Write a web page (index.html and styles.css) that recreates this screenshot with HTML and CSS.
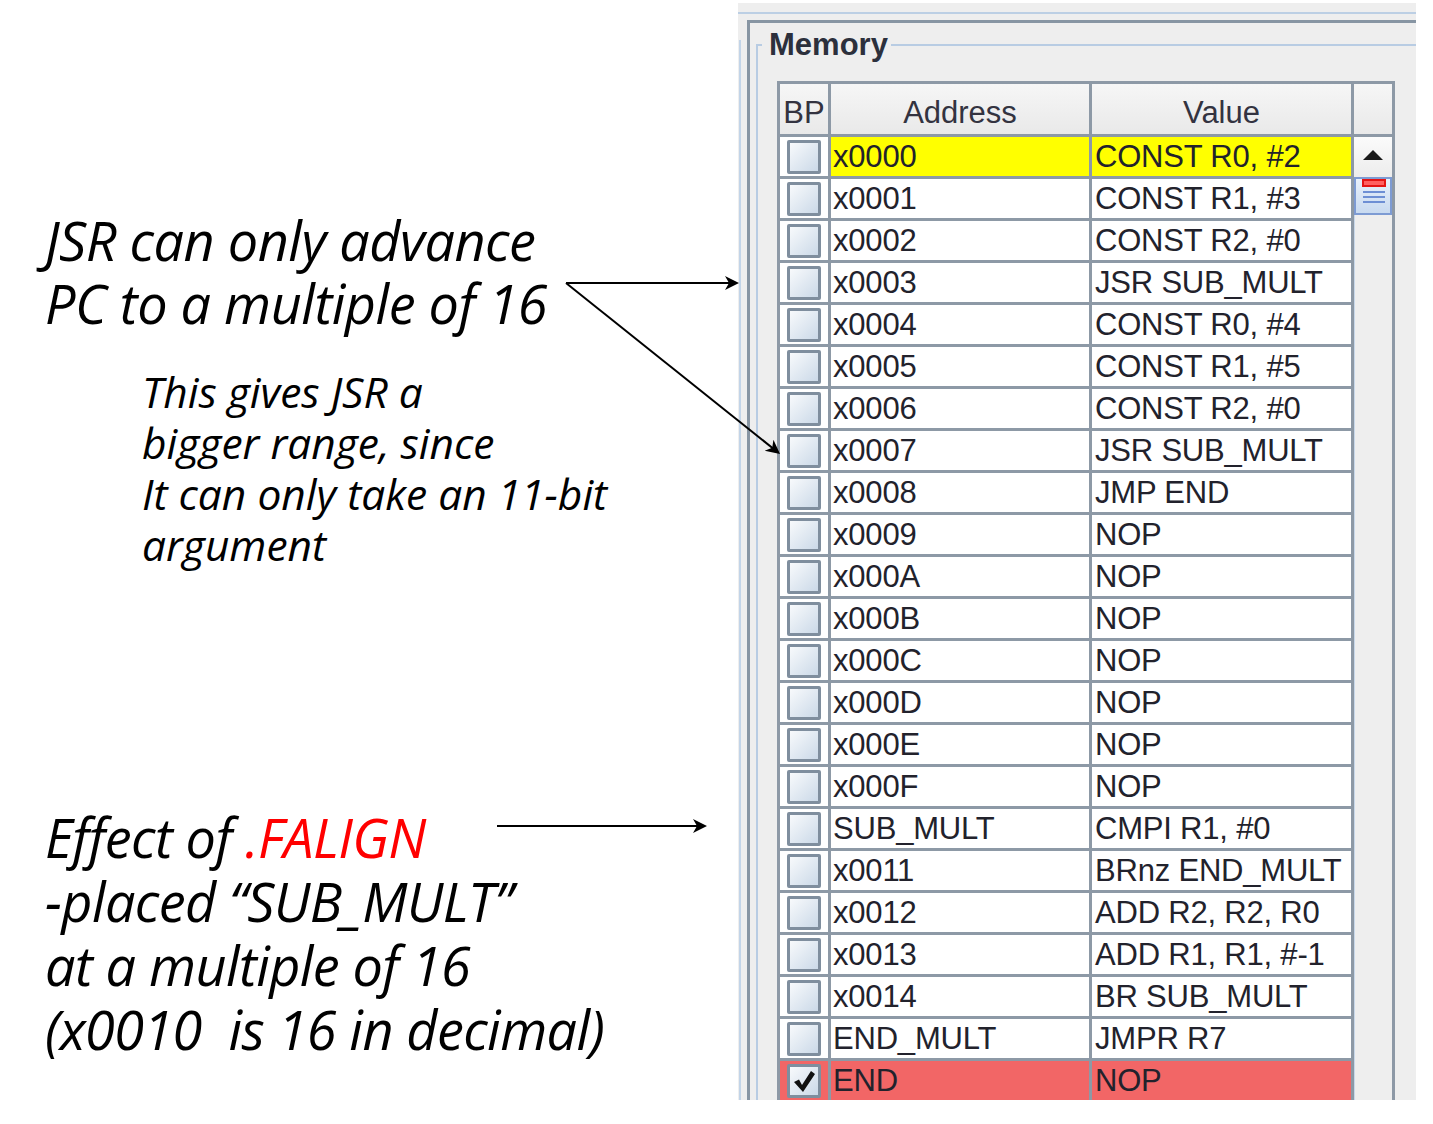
FILE: index.html
```html
<!DOCTYPE html>
<html>
<head>
<meta charset="utf-8">
<link rel="stylesheet" href="styles.css">
</head>
<body>
<div class="page">
  <div class="notes">
    <div class="note-main">JSR can only advance<br>PC to a multiple of 16</div>
    <div class="note-sub">This gives JSR a<br>bigger range, since<br>It can only take an 11-bit<br>argument</div>
    <div class="note-effect">Effect of <span class="red">.FALIGN</span><br>-placed “SUB_MULT”<br>at a multiple of 16<br>(x0010&nbsp; is 16 in decimal)</div>
  </div>

  <div class="panel">
    <div class="panel-top"></div>
    <div class="panel-body">
      <div class="gutter"><span></span></div>
      <div class="frame">
        <fieldset class="mem">
          <legend>Memory</legend>
          <div class="tbl">
            <div class="thead">
              <div class="th">BP</div>
              <div class="th">Address</div>
              <div class="th">Value</div>
              <div class="th"></div>
            </div>
            <div class="tbody">
              <div class="rows">
                <div class="row hl"><div class="bp"><span class="cb"></span></div><div class="cell">x0000</div><div class="cell val">CONST R0, #2</div></div>
                <div class="row"><div class="bp"><span class="cb"></span></div><div class="cell">x0001</div><div class="cell val">CONST R1, #3</div></div>
                <div class="row"><div class="bp"><span class="cb"></span></div><div class="cell">x0002</div><div class="cell val">CONST R2, #0</div></div>
                <div class="row"><div class="bp"><span class="cb"></span></div><div class="cell">x0003</div><div class="cell val">JSR SUB_MULT</div></div>
                <div class="row"><div class="bp"><span class="cb"></span></div><div class="cell">x0004</div><div class="cell val">CONST R0, #4</div></div>
                <div class="row"><div class="bp"><span class="cb"></span></div><div class="cell">x0005</div><div class="cell val">CONST R1, #5</div></div>
                <div class="row"><div class="bp"><span class="cb"></span></div><div class="cell">x0006</div><div class="cell val">CONST R2, #0</div></div>
                <div class="row"><div class="bp"><span class="cb"></span></div><div class="cell">x0007</div><div class="cell val">JSR SUB_MULT</div></div>
                <div class="row"><div class="bp"><span class="cb"></span></div><div class="cell">x0008</div><div class="cell val">JMP END</div></div>
                <div class="row"><div class="bp"><span class="cb"></span></div><div class="cell">x0009</div><div class="cell val">NOP</div></div>
                <div class="row"><div class="bp"><span class="cb"></span></div><div class="cell">x000A</div><div class="cell val">NOP</div></div>
                <div class="row"><div class="bp"><span class="cb"></span></div><div class="cell">x000B</div><div class="cell val">NOP</div></div>
                <div class="row"><div class="bp"><span class="cb"></span></div><div class="cell">x000C</div><div class="cell val">NOP</div></div>
                <div class="row"><div class="bp"><span class="cb"></span></div><div class="cell">x000D</div><div class="cell val">NOP</div></div>
                <div class="row"><div class="bp"><span class="cb"></span></div><div class="cell">x000E</div><div class="cell val">NOP</div></div>
                <div class="row"><div class="bp"><span class="cb"></span></div><div class="cell">x000F</div><div class="cell val">NOP</div></div>
                <div class="row"><div class="bp"><span class="cb"></span></div><div class="cell">SUB_MULT</div><div class="cell val">CMPI R1, #0</div></div>
                <div class="row"><div class="bp"><span class="cb"></span></div><div class="cell">x0011</div><div class="cell val">BRnz END_MULT</div></div>
                <div class="row"><div class="bp"><span class="cb"></span></div><div class="cell">x0012</div><div class="cell val">ADD R2, R2, R0</div></div>
                <div class="row"><div class="bp"><span class="cb"></span></div><div class="cell">x0013</div><div class="cell val">ADD R1, R1, #-1</div></div>
                <div class="row"><div class="bp"><span class="cb"></span></div><div class="cell">x0014</div><div class="cell val">BR SUB_MULT</div></div>
                <div class="row"><div class="bp"><span class="cb"></span></div><div class="cell">END_MULT</div><div class="cell val">JMPR R7</div></div>
                <div class="row brk"><div class="bp"><span class="cb"><svg class="tick" viewBox="0 0 28 28" width="28" height="28"><path d="M4,15 L9,12.5 L12,18 L21,4 L25,7 L13,25 Z" fill="#111"/></svg></span></div><div class="cell">END</div><div class="cell val">NOP</div></div>
              </div>
              <div class="scroll">
                <div class="up"><i></i></div>
                <div class="thumb"><div class="mark"></div><div class="grip"></div><div class="grip"></div><div class="grip"></div></div>
                <div class="track"></div>
              </div>
            </div>
          </div>
        </fieldset>
      </div>
    </div>
  </div>

  <svg class="arrows" viewBox="0 0 1433 1124" width="1433" height="1124">
    <defs>
      <marker id="ah" markerWidth="16" markerHeight="16" refX="10" refY="7" orient="auto" markerUnits="userSpaceOnUse">
        <path d="M0,0 L14,7 L0,14 L4,7 Z" fill="#000"/>
      </marker>
    </defs>
    <line x1="566" y1="283" x2="735" y2="283" stroke="#000" stroke-width="2" marker-end="url(#ah)"/>
    <line x1="566" y1="283" x2="776.9" y2="451.5" stroke="#000" stroke-width="2" marker-end="url(#ah)"/>
    <line x1="497" y1="826" x2="703" y2="826" stroke="#000" stroke-width="2" marker-end="url(#ah)"/>
  </svg>
</div>
</body>
</html>
```

FILE: styles.css
```css
body {
  margin: 0;
  background: #ffffff;
}

.page {
  position: relative;
  width: 1433px;
  height: 1124px;
  overflow: hidden;
  display: flex;
  align-items: flex-start;
}

/* ---------- annotations ---------- */
.notes {
  width: 738px;
  flex: none;
  box-sizing: border-box;
  padding-left: 45px;
  font-family: "Open Sans", "Noto Sans", sans-serif;
  font-style: italic;
  color: #000;
  white-space: nowrap;
}

.note-main {
  font-size: 54px;
  line-height: 63px;
  letter-spacing: -0.5px;
  margin-top: 209px;
}

.note-sub {
  font-size: 42.5px;
  line-height: 51px;
  margin: 31px 0 0 97px;
}

.note-effect {
  font-size: 54px;
  line-height: 64px;
  letter-spacing: -0.6px;
  margin-top: 235px;
}

.red {
  color: #ff0000;
}

/* ---------- memory panel ---------- */
.panel {
  width: 678px;
  height: 1097px;
  margin-top: 3px;
  flex: none;
  background: #eeeeee;
  display: flex;
  flex-direction: column;
  overflow: hidden;
  font-family: "Liberation Sans", Arial, sans-serif;
}

.panel-top {
  height: 9px;
  flex: none;
  border-bottom: 2px solid #bccfe4;
  margin-bottom: 6px;
}

.panel-body {
  flex: 1;
  display: flex;
  min-height: 0;
}

.gutter {
  width: 9px;
  flex: none;
  box-sizing: border-box;
  padding: 20px 0 0 1px;
  display: flex;
}

.gutter span {
  width: 2px;
  background: #c2d4e8;
}

.frame {
  flex: 1;
  min-width: 0;
  border-top: 3px solid #8795a3;
  border-left: 3px solid #8795a3;
  padding: 7px 0 0 6px;
}

.mem {
  margin: 0;
  padding: 0;
  min-width: 0;
  border: none;
  border-top: 2px solid #b8cce3;
  border-left: 2px solid #b8cce3;
}

.mem legend {
  margin-left: 4px;
  padding: 0 3px 0 7px;
  font-weight: bold;
  font-size: 31px;
  line-height: 30px;
  color: #2c303c;
}

.tbl {
  margin: 21px 0 0 19px;
  width: 618px;
  box-sizing: border-box;
  border: 3px solid #8d99a6;
  border-bottom: none;
  background: #8d99a6;
}

.thead {
  display: grid;
  grid-template-columns: 48px 258px 259px 38px;
  column-gap: 3px;
  height: 50px;
  margin-bottom: 3px;
}

.th {
  box-sizing: border-box;
  padding-top: 7px;
  background: linear-gradient(#f6f6f6, #e9e9e9);
  display: flex;
  align-items: center;
  justify-content: center;
  font-size: 31px;
  color: #333340;
}

.tbody {
  display: flex;
  gap: 3px;
}

.rows {
  display: grid;
  grid-template-columns: 48px 258px 259px;
  grid-auto-rows: 39px;
  gap: 3px;
}

.row {
  display: contents;
}

.bp {
  background: #ffffff;
  display: flex;
  align-items: center;
  justify-content: center;
}

.cell {
  background: #ffffff;
  font-size: 31px;
  line-height: 40px;
  color: #22222c;
  white-space: nowrap;
  overflow: hidden;
  padding-left: 2px;
  letter-spacing: -0.2px;
}

.cell.val {
  padding-left: 3px;
}

.hl .cell {
  background: #ffff00;
}

.brk .bp,
.brk .cell {
  background: #f26666;
}

.cb {
  width: 34px;
  height: 34px;
  box-sizing: border-box;
  border: 3px solid #7f8e9e;
  border-radius: 2px;
  background: linear-gradient(135deg, #f8fafc, #cbd9e8);
  display: block;
}

.tick {
  display: block;
}

/* ---------- scrollbar ---------- */
.scroll {
  width: 38px;
  flex: none;
  background: #eeeeee;
  display: flex;
  flex-direction: column;
}

.up {
  height: 40px;
  flex: none;
  background: linear-gradient(#fbfbfb, #ececec);
  display: flex;
  align-items: center;
  justify-content: center;
}

.up i {
  width: 0;
  height: 0;
  border-left: 10px solid transparent;
  border-right: 10px solid transparent;
  border-bottom: 10px solid #1a1a1a;
  margin-top: -4px;
}

.thumb {
  height: 38px;
  flex: none;
  box-sizing: border-box;
  border: 2px solid #7d9bd3;
  background: linear-gradient(#e8f0fa, #c8daf0);
  padding: 0 4px 0 6px;
}

.mark {
  height: 8px;
  box-sizing: border-box;
  background: #ff6060;
  border: 2px solid #e41414;
  margin-bottom: 4px;
}

.grip {
  height: 2px;
  background: #6d8fd4;
  margin: 0 1px 3px;
}

.track {
  flex: 1;
  border-left: 1px solid #c8d8ea;
}

/* ---------- arrows ---------- */
.arrows {
  position: absolute;
  left: 0;
  top: 0;
  pointer-events: none;
}
```
